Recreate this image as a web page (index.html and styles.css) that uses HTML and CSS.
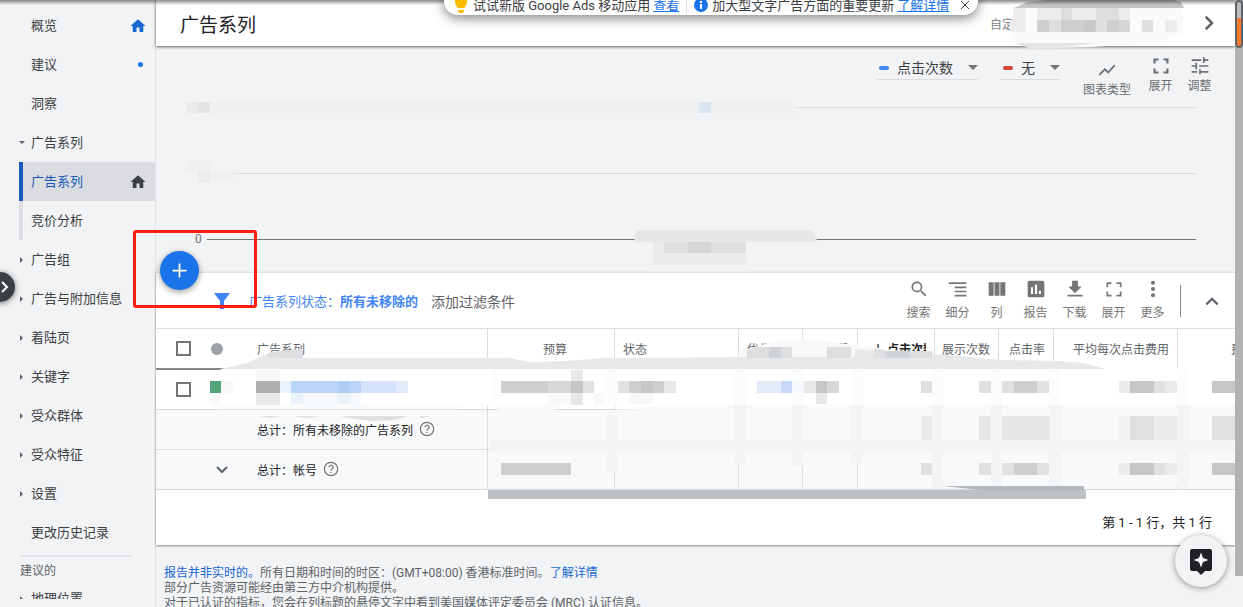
FILE: index.html
```html
<!DOCTYPE html>
<html lang="zh-CN">
<head>
<meta charset="utf-8">
<title>广告系列 - Google Ads</title>
<meta name="viewport" content="width=device-width, initial-scale=1">
<link rel="stylesheet" href="styles.css">
</head>
<body>
<div class="app">
  <nav class="sidebar">
    <div class="nav-scroll">
      <ul class="nav">
        <li><a href="#">概览<svg class="home" viewBox="0 0 24 24"><path d="M10 20v-6h4v6h5v-8h3L12 3 2 12h3v8z"/></svg></a></li>
        <li><a href="#">建议<span class="dot"></span></a></li>
        <li><a href="#">洞察</a></li>
        <li><a href="#" class="open">广告系列</a></li>
        <li class="sub"><a href="#" class="active">广告系列<svg class="home" viewBox="0 0 24 24"><path d="M10 20v-6h4v6h5v-8h3L12 3 2 12h3v8z"/></svg></a></li>
        <li class="sub"><a href="#">竞价分析</a></li>
        <li><a href="#" class="closed">广告组</a></li>
        <li><a href="#" class="closed">广告与附加信息</a></li>
        <li><a href="#" class="closed">着陆页</a></li>
        <li><a href="#" class="closed">关键字</a></li>
        <li><a href="#" class="closed">受众群体</a></li>
        <li><a href="#" class="closed">受众特征</a></li>
        <li><a href="#" class="closed">设置</a></li>
        <li><a href="#">更改历史记录</a></li>
      </ul>
      <h2 class="nav-title">建议的</h2>
      <ul class="nav"><li><a href="#" class="closed">地理位置</a></li></ul>
    </div>
    <button class="handle" aria-label="展开导航"><svg viewBox="0 0 12 16"><path d="M3 3l5 5-5 5"/></svg></button>
  </nav>

  <main class="main">
    <header class="header">
      <h1>广告系列</h1>
      <span class="range">自定义</span>
      <button class="next" aria-label="下一时段"><svg viewBox="0 0 12 16"><path d="M3 3l5 5-5 5"/></svg></button>
      <svg class="mask range-mask" viewBox="1006 0 184 50" aria-hidden="true">
        <path fill="#fafafa" d="M1010 32l3-16 7-9h163v26l-21 9-70 5-40 1-36-3z"/>
        <path fill="#c4c5c6" d="M1014 8l14-6 20-2h126l7 2 3 6z"/>
        <path fill="#e3e4e5" d="M1016 43h83l-44 5-24 1z"/>
        <path fill="#ececec" d="M1013 8h12v12h-12zM1037 8h24v12h-24zM1072 8h24v12h-24zM1119 8h11v12h-11zM1010 20h15v12h-15zM1165 20h12v12h-12z"/>
        <path fill="#dedede" d="M1061 8h11v12h-11zM1096 8h23v12h-23zM1049 20h12v12h-12zM1096 20h11v12h-11zM1142 20h11v12h-11z"/>
        <path fill="#cfcfcf" d="M1037 20h12v12h-12zM1061 20h35v12h-35zM1107 20h12v12h-12z"/>
        <path fill="#c4c4c4" d="M1084 20h11v12h-11zM1119 20h11v12h-11z" opacity=".7"/>
      </svg>
    </header>

    <section class="chart">
      <div class="chart-tools">
        <label class="metric blue"><span class="dash"></span><select aria-label="指标一"><option>点击次数</option></select><span class="caret"></span></label>
        <label class="metric red"><span class="dash"></span><select aria-label="指标二"><option>无</option></select><span class="caret"></span></label>
        <button class="tool low"><svg viewBox="0 0 24 24"><path d="M3.5 18.5l6-6 4 4L22 6.9l-1.400-1.400-7.100 8-4-4L2 17z"/></svg>图表类型</button>
        <button class="tool"><svg viewBox="0 0 24 24"><path d="M3 3h6v2.500H5.500V9H3zM15 3h6v6h-2.500V5.500H15zM3 15h2.500v3.500H9V21H3zM18.500 15H21v6h-6v-2.500h3.500z"/></svg>展开</button>
        <button class="tool"><svg viewBox="0 0 24 24"><path d="M2 18v2h6.500v-2zM2 4v2h11.500V4zM13 22v-2h9v-2h-9v-2h-2v6zM6.500 8v3H2v2h4.500v3h2V8zM22 13v-2H11v2zM15.500 8.500h2V6H22V4h-4.500V1.500h-2z"/></svg>调整</button>
      </div>
      <div class="plot">
        <div class="tick"><span></span></div>
        <div class="tick"><span></span></div>
        <div class="tick base"><span>0</span></div>
        <svg class="mask plot-mask" viewBox="180 95 640 175" aria-hidden="true">
          <path fill="#f1f3f5" d="M180 95h610l6 12-4 8H180zM186 160h48v24h-48z"/>
          <path fill="#eff0f2" d="M210 102h582l4 11H210zM186 160h24v12h-24zM210 172h24v10h-24z"/>
          <path fill="#eaebec" d="M186 102h12v11h-12zM198 172h12v11h-12z"/>
          <path fill="#e3e4e6" d="M198 102h12v11h-12z"/>
          <path fill="#dae4f3" d="M699 102h12v11h-12z"/>
          <path fill="#e6e7e8" d="M634 242l1-8 2-4h175l4 6 1 6z"/>
          <path fill="#eaebec" d="M653 242h11v23h-11zM664 253h82v12h-82z"/>
          <path fill="#dedfe1" d="M664 242h82v11h-82z"/>
          <path fill="#d5d6d8" d="M688 242h23v11h-23z"/>
        </svg>
      </div>
    </section>

    <section class="panel">
      <button class="fab" aria-label="新建广告系列"><svg viewBox="0 0 24 24"><path d="M20 13h-7v7h-2v-7H4v-2h7V4h2v7h7z"/></svg></button>
      <div class="filters">
        <svg class="funnel" viewBox="0 0 16 16"><path d="M0 0h16l-6 8v8H6V8z"/></svg>
        <a href="#" class="state">广告系列状态：<b>所有未移除的</b></a>
        <button class="add">添加过滤条件</button>
        <div class="actions">
          <button class="tool"><svg viewBox="0 0 24 24"><path d="M15.500 14h-.8l-.3-.3A6.500 6.500 0 1 0 13.700 14.400l.3.3v.8l5.500 5.500 1.500-1.500zm-6 0a4.500 4.500 0 1 1 0-9 4.500 4.500 0 0 1 0 9z"/></svg>搜索</button>
          <button class="tool"><svg viewBox="0 0 24 24"><path d="M1 4h21v2H1zM8 9h14v2H8zM8 14h14v2H8zM8 19h14v2H8z"/></svg>细分</button>
          <button class="tool"><svg viewBox="0 0 24 24"><path d="M2 4h6v16H2zM9 4h6v16H9zM16 4h6v16h-6z"/></svg>列</button>
          <button class="tool"><svg viewBox="0 0 24 24"><path fill-rule="evenodd" d="M4 2h16a2 2 0 0 1 2 2v16a2 2 0 0 1-2 2H4a2 2 0 0 1-2-2V4a2 2 0 0 1 2-2zM6 10v8h2.500v-8zM10.700 7v11h2.600V7zM15.500 14v4H18v-4z"/></svg>报告</button>
          <button class="tool"><svg viewBox="0 0 24 24"><path d="M20 9h-4.500V2h-7v7H4l8 8zM3 19v2h18v-2z"/></svg>下载</button>
          <button class="tool"><svg viewBox="0 0 24 24"><path d="M3 4h6v2H5v4H3zM15 4h6v6h-2V6h-4zM3 15h2v4h4v2H3zM19 15h2v6h-6v-2h4z"/></svg>展开</button>
          <button class="tool"><svg viewBox="0 0 24 24"><circle cx="12" cy="4.500" r="2.500"/><circle cx="12" cy="12" r="2.500"/><circle cx="12" cy="19.500" r="2.500"/></svg>更多</button>
        </div>
        <button class="collapse" aria-label="收起"><svg viewBox="0 0 16 12"><path d="M3 9l5-5 5 5"/></svg></button>
      </div>

      <div class="grid-wrap">
        <table class="grid">
          <colgroup><col class="c-check"><col class="c-dot"><col class="c-name"><col class="c-budget"><col class="c-status"><col class="c-opt"><col class="c-type"><col class="c-click"><col class="c-opt"><col class="c-type"><col class="c-status"><col></colgroup>
          <thead>
            <tr>
              <th><input type="checkbox" aria-label="全选"></th><th><span class="status"></span></th><th class="name">广告系列</th><th class="center">预算</th><th class="left">状态</th><th class="left">优化得分</th><th>阶段</th><th class="sorted"><span>↓ 点击次数</span></th><th>展示次数</th><th>点击率</th><th>平均每次点击费用</th><th class="edge"><span>费用</span></th>
            </tr>
          </thead>
          <tbody>
            <tr><td><input type="checkbox" aria-label="选择广告系列"></td><td></td><td class="name"></td><td></td><td></td><td></td><td></td><td></td><td></td><td></td><td></td><td></td></tr>
            <tr class="total"><td></td><td></td><td class="name">总计：所有未移除的广告系列<svg class="help" viewBox="0 0 24 24"><circle cx="12" cy="12" r="10"/><path d="M9 9.500a3 3 0 1 1 4.500 2.600c-1 .7-1.500 1.200-1.500 2.400M12 16.500v2"/></svg></td><td></td><td></td><td></td><td></td><td></td><td></td><td></td><td></td><td></td></tr>
            <tr class="total"><td></td><td><svg class="down" viewBox="0 0 16 12"><path d="M3 3l5 5 5-5"/></svg></td><td class="name">总计：帐号<svg class="help" viewBox="0 0 24 24"><circle cx="12" cy="12" r="10"/><path d="M9 9.500a3 3 0 1 1 4.500 2.600c-1 .7-1.500 1.200-1.500 2.400M12 16.500v2"/></svg></td><td></td><td></td><td></td><td></td><td></td><td></td><td></td><td></td><td></td></tr>
          </tbody>
        </table>
        <div class="hscroll"><div class="hthumb"></div></div>
        <svg class="mask grid-mask" viewBox="156 328 1079 174" aria-hidden="true">
          <path fill="#fff" d="M210 380l11-11 14-1h1000v37H213l-3-5z"/>
          <path fill="#f8f9fb" d="M212 405h253l-8 4H218zM494 405h68l-12 7-48 2zM490 449l4-12V412h70l78-3 13-4h582v82H943v-24H618l-12 10-10-10H494z"/>
          <path fill="#f8f8f9" d="M740 351l18-5 20-5 22-2 20 1 25 4 27 3 30 4v9H740z"/>
          <path fill="#e7e8ea" d="M221 369l26-6 21-10 20-3 15-1v9h185l20 0 22 4 35-1 40-3h40l90-1h120v-8l35 3 60 3 50 5 60 1 24 2 22 6z"/>
          <path fill="#dcdee0" d="M268 353l20-3h15v8h-35zM747 351l8-4h37v11h-45zM827 347h24v11h-24zM874 348l12 3h46v7h-58z"/>
          <path fill="#cfd2d6" d="M769 347h12v11h-12zM886 351h24v7h-24z"/>
          <path fill="#fbfdfc" d="M491 370h6v32h-6zM606 370h11v35h-11zM734 370h12v35h-12zM792 370h11v35h-11zM851 370h12v35h-12zM932 370h11v35h-11zM991 370h11v35h-11zM1049 370h12v35h-12zM1177 370h12v35h-12z"/>
          <path fill="#f3f4f6" d="M606 415h12v55l-12 3zM734 405h12v59h-12zM792 405h11v61h-11zM851 405h12v59h-12zM932 405h11v82h-11zM991 405h11v82h-11zM1049 405h12v82h-12zM1177 405h12v82h-12zM490 440h745v12H490z"/>
          <path fill="#53a47a" d="M210 381h11v12h-11z"/>
          <path fill="#f7f8f8" d="M221 381h12v12h-12zM210 393h11v11h-11zM256 370h24v11h-24zM594 393h11v11h-11zM548 393h23v11h-23zM629 393h24v11h-24z"/>
          <path fill="#afafaf" d="M256 381h24v12h-24z"/>
          <path fill="#e8e8e8" d="M256 393h24v12h-24zM571 370h12v35h-12zM664 381h12v12h-12zM804 381h12v12h-12zM816 393h11v11h-11z"/>
          <path fill="#eaf2fe" d="M280 381h11v12h-11zM291 393h12v11h-12zM338 393h12v11h-12z"/>
          <path fill="#f5f9fe" d="M303 393h35v12h-35zM350 393h11v12h-11zM792 381h12v12h-12z"/>
          <path fill="#bdd5f8" d="M291 381h70v12h-70z"/>
          <path fill="#afcdf6" d="M338 381h12v12h-12z"/>
          <path fill="#d5e3fa" d="M361 381h35v12h-35z"/>
          <path fill="#e3ebfa" d="M396 381h12v12h-12zM757 381h24v12h-24z"/>
          <path fill="#c9d8f5" d="M781 381h11v12h-11z"/>
          <path fill="#cecece" d="M501 381h47v12h-47zM629 381h35v12h-35zM501 463h70v12h-70zM1014 381h23v12h-23zM1014 463h23v12h-23z"/>
          <path fill="#d6d7d7" d="M548 381h23v12h-23zM827 381h12v12h-12z"/>
          <path fill="#c5c6c6" d="M571 381h12v12h-12zM641 381h12v12h-12zM816 381h11v12h-11zM1130 381h24v12h-24zM1212 381h23v12h-23zM1130 463h24v12h-24zM1212 463h23v12h-23z"/>
          <path fill="#dfe0e0" d="M583 381h11v12h-11zM618 381h11v12h-11zM921 381h11v12h-11zM979 381h12v12h-12zM1002 381h12v12h-12zM1037 381h12v12h-12zM1154 381h11v12h-11zM921 463h11v12h-11zM979 463h12v12h-12zM1002 463h12v12h-12zM1037 463h12v12h-12zM1154 463h11v12h-11zM1130 416h24v24h-24zM1212 416h23v24h-23z"/>
          <path fill="#eaebec" d="M1119 381h11v12h-11zM1165 381h12v12h-12zM1119 463h11v12h-11zM1165 463h12v12h-12zM1154 416h23v24h-23zM921 416h11v24h-11z"/>
          <path fill="#e5e6e8" d="M979 416h12v24h-12zM1002 416h47v24h-47z"/>
          <path fill="#f1f2f3" d="M1119 416h11v24h-11z"/>
          <path fill="#dedfe1" d="M258 416h22l-8 2zM291 416h29l-12 2zM340 416h68l-14 4-20 1-20-2zM419 416h12l-10 2z"/>
          <path fill="#b5b7bf" d="M943 486h141v4H980z"/>
        </svg>
      </div>
      <div class="pager">第 1 - 1 行，共 1 行</div>
    </section>

    <footer class="footer">
      <p><a href="#">报告并非实时的。</a>所有日期和时间的时区：(GMT+08:00) 香港标准时间。<a href="#">了解详情</a></p>
      <p>部分广告资源可能经由第三方中介机构提供。</p>
      <p>对于已认证的指标，您会在列标题的悬停文字中看到美国媒体评定委员会 (MRC) 认证信息。</p>
    </footer>
    <button class="assist" aria-label="智能助理"><svg viewBox="0 0 24 26"><path fill="#202124" d="M3 0h18a2 2 0 0 1 2 2v18a2 2 0 0 1-2 2h-5l-4 4-4-4H3a2 2 0 0 1-2-2V2a2 2 0 0 1 2-2z"/><path fill="#fff" d="M12 3.500l2 5.500 5.500 2-5.500 2-2 5.500-2-5.500-5.500-2 5.500-2z"/></svg></button>
  </main>

  <div class="vscroll"><div class="vtrack"><div class="vthumb"></div></div></div>

  <div class="notice">
    <svg class="bulb" viewBox="0 0 12 18"><path d="M6 0a6 6 0 0 1 6 6c0 3-2 4-2.500 6h-7C2 10 0 9 0 6a6 6 0 0 1 6-6zM3 14h6v1l-1 2H4l-1-2z"/></svg>
    <span>试试新版 Google Ads 移动应用</span>
    <a href="#">查看</a>
    <span class="bar"></span>
    <svg class="info" viewBox="0 0 14 14"><circle cx="7" cy="7" r="7"/><path fill="#fff" d="M6 3h2v2H6zM6 6h2v5H6z"/></svg>
    <span>加大型文字广告方面的重要更新</span>
    <a href="#">了解详情</a>
    <button aria-label="关闭"><svg viewBox="0 0 10 10"><path d="M1 1l8 8M9 1L1 9"/></svg></button>
  </div>
  <div class="highlight"></div>
</div>
</body>
</html>
```
FILE: styles.css
```css
* { box-sizing: border-box; }
body {
  margin: 0;
  overflow: hidden;
  font-family: Roboto, "Noto Sans CJK SC", sans-serif;
  font-size: 13px;
  color: #3c4043;
  background: #f1f3f5;
}
a { color: #1967d2; text-decoration: none; }
button {
  padding: 0;
  border: 0;
  background: none;
  color: inherit;
  font: inherit;
}
h1, h2, p, ul { margin: 0; padding: 0; font-weight: 400; }
ul { list-style: none; }
svg { display: block; }

.app { position: relative; display: flex; height: 100vh; }
.app::before {
  content: "";
  position: absolute;
  inset: 0 0 auto;
  height: 5px;
  z-index: 4;
  background: linear-gradient(rgba(0, 0, 0, .45), rgba(0, 0, 0, 0));
}

/* navigation */
.sidebar {
  position: relative;
  flex: 0 0 156px;
  padding: 6px 0 8px;
  border-right: 1px solid #dfe1e4;
}
.nav-scroll { height: 100%; overflow: hidden; }
.nav a {
  display: flex;
  align-items: center;
  height: 39px;
  padding: 0 8px 0 31px;
  color: #3c4043;
  line-height: 20px;
}
.nav a::before { content: ""; width: 0; }
.nav .open::before, .nav .closed::before {
  margin-left: -12px;
  margin-right: 6px;
  border: 3px solid transparent;
}
.nav .open::before { border-top-color: #5f6368; border-bottom: 0; }
.nav .closed::before { border-left-color: #5f6368; margin-left: -11px; margin-right: 5px; }
.nav .sub { margin-left: 19px; }
.nav .sub a { padding-left: 8px; border-left: 4px solid #dadce0; }
.nav .sub .active { border-color: #185abc; background: #dadce0; color: #185abc; }
.home { width: 18px; height: 18px; margin-left: auto; fill: #1967d2; }
.active .home { fill: #3c4043; }
.dot { width: 5px; height: 5px; margin: 0 4px 0 auto; border-radius: 50%; background: #1a73e8; }
.nav-title {
  margin: 3px 24px 0 20px;
  padding-top: 4px;
  border-top: 2px solid #e1e3e6;
  font-size: 12px;
  line-height: 20px;
  height: 24px;
  color: #5f6368;
}
.handle {
  position: absolute;
  left: -15px;
  top: 272px;
  width: 30px;
  height: 30px;
  padding-left: 14px;
  border-radius: 50%;
  background: #3c4043;
  box-shadow: 0 1px 6px rgba(0, 0, 0, .5);
}
.handle svg { width: 12px; height: 16px; }
.handle path, .next path, .collapse path, .down path { fill: none; stroke: #fff; stroke-width: 2; }
.next path, .collapse path, .down path { stroke: #5f6368; }

/* header */
.main { position: relative; flex: 1; min-width: 0; display: flex; flex-direction: column; }
.main > * { flex-shrink: 0; }
.header {
  position: relative;
  z-index: 2;
  display: flex;
  align-items: center;
  height: 46px;
  padding: 0 20px 0 24px;
  background: #fff;
  box-shadow: 0 1px 3px rgba(0, 0, 0, .6);
}
h1 { flex: 1; font-size: 19px; color: #202124; }
.range { width: 212px; font-size: 12px; color: #80868b; }
.next { width: 13px; }
.next svg { width: 15px; height: 20px; }
.next path, .collapse path { stroke-width: 2; }
.mask { position: absolute; pointer-events: none; }
.range-mask { right: 45px; top: 0; width: 184px; height: 50px; }

/* chart */
.chart { height: 226px; }
.chart-tools { display: flex; justify-content: flex-end; height: 54px; padding: 10px 16px 0 0; }
.metric {
  display: flex;
  align-items: center;
  gap: 8px;
  height: 24px;
  margin-right: 23px;
  border-bottom: 1px solid #dadce0;
}
.dash { width: 10px; height: 4px; margin-left: 2px; border-radius: 2px; background: #4285f4; }
.red .dash { background: #db4437; }
.metric select {
  width: 62px;
  border: 0;
  padding: 0;
  appearance: none;
  background: none;
  font: inherit;
  font-size: 14px;
  color: #3c4043;
}
.red select { width: 20px; }
.caret { border: 5px solid transparent; border-top-color: #757575; border-bottom: 0; margin-left: 1px; }
.tool {
  display: flex;
  flex-direction: column;
  align-items: center;
  gap: 1px;
  width: 39px;
  font-size: 12px;
  line-height: 18px;
  white-space: nowrap;
  color: #6b6e72;
}
.tool svg { width: 20px; height: 20px; fill: #6b6e72; }
.chart-tools .low { width: 48px; margin-right: 10px; padding-top: 4px; }
.plot { position: relative; padding-top: 7px; }
.tick { display: flex; align-items: flex-start; height: 66px; margin: 0 39px 0 30px; }
.tick::after { content: ""; flex: 1; border-top: 1px solid #dadce0; }
.tick span { width: 21px; margin-top: -8px; padding-left: 9px; font-size: 12px; line-height: 16px; color: #757575; }
.base { height: 33px; }
.base::after { border-color: #757575; }
.plot-mask { left: 24px; top: -5px; width: 640px; height: 175px; }

/* table panel */
.panel {
  position: relative;
  border-top: 1px solid #dfe1e4;
  background: #fff;
  box-shadow: 0 1px 2px rgba(0, 0, 0, .45);
}
.fab {
  position: absolute;
  z-index: 1;
  left: 4px;
  top: -22px;
  width: 39px;
  height: 39px;
  padding: 9px;
  border-radius: 50%;
  background: #1a73e8;
  box-shadow: 0 2px 6px rgba(0, 0, 0, .4);
}
.fab svg { width: 21px; height: 21px; fill: #fff; }
.filters { display: flex; align-items: center; height: 55px; padding: 0 11px 0 58px; }
.funnel { width: 16px; height: 16px; fill: #4285f4; }
.state { margin-left: 19px; color: #4285f4; }
.add { margin-left: 13px; font-size: 14px; color: #5f6368; }
.actions {
  display: flex;
  margin-left: auto;
  padding-right: 7px;
}
.actions::after { content: ""; align-self: center; height: 32px; margin-left: 8px; margin-right: -8px; border-left: 1px solid #80868b; }
.actions .tool { gap: 5px; color: #757575; }
.actions svg { fill: #757575; }
.collapse { width: 24px; margin-left: 20px; }
.collapse svg { width: 18px; height: 14px; margin: auto; }
.grid-wrap { position: relative; overflow: hidden; }
.grid { width: 100%; table-layout: fixed; border-collapse: separate; border-spacing: 0; border-top: 1px solid #dadce0; }
.c-check { width: 49px; }
.c-dot { width: 41px; }
.c-name { width: 242px; }
.c-budget { width: 127px; }
.c-status { width: 124px; }
.c-opt { width: 64px; }
.c-type { width: 55px; }
.c-click { width: 77px; }
.grid th, .grid td {
  height: 40px;
  padding: 0 8px 0 0;
  border-right: 1px solid #dadce0;
  border-bottom: 1px solid #dadce0;
  text-align: right;
  font-size: 12px;
  font-weight: 400;
  white-space: nowrap;
  color: #5f6368;
}
.grid th { height: 41px; border-bottom: 2px solid #80868b; }
.grid th:nth-child(-n+2), .grid td:nth-child(-n+2), .grid th:last-child, .grid td:last-child { border-right: 0; }
.grid .name { padding-left: 11px; text-align: left; color: #5f6368; }
.grid .center { padding-left: 16px; text-align: center; }
.grid .left { text-align: left; padding-left: 8px; }
.grid th.sorted { color: #202124; font-weight: 700; }
.sorted span { display: block; margin-left: 14px; overflow: hidden; text-align: left; }
.grid th.edge { padding: 0 0 0 53px; text-align: left; overflow: hidden; }
.total td { background: #f8f9fb; }
.grid .total .name { color: #202124; }
.grid input {
  display: block;
  appearance: none;
  width: 15px;
  height: 15px;
  margin: 0 0 0 20px;
  border: 2px solid #757575;
  background: #fff;
}
.status { display: block; width: 12px; height: 12px; margin-left: 6px; border-radius: 50%; background: #9aa0a6; }
.help { display: inline-block; width: 16px; height: 16px; margin-left: 6px; vertical-align: -2px; fill: none; stroke: #757575; stroke-width: 1.800; }
.down { width: 16px; height: 12px; margin-left: 9px; }
.hscroll { padding-left: 332px; }
.hthumb { width: 80%; height: 9px; background: #bdc1c6; }
.grid-mask { left: 0; top: 0; width: 1079px; height: 174px; }
.pager { padding: 14px 23px 12px 0; text-align: right; line-height: 20px; color: #202124; }

.footer { padding: 21px 8px 0; font-size: 12px; line-height: 15px; white-space: nowrap; color: #5f6368; }
.assist {
  position: absolute;
  right: 8px;
  bottom: 20px;
  width: 52px;
  height: 52px;
  padding: 14px;
  border-radius: 50%;
  background: #f1f3f4;
  box-shadow: 0 1px 6px rgba(0, 0, 0, .4);
}
.assist svg { width: 24px; height: 26px; }

/* page scrollbar */
.vscroll { position: relative; z-index: 5; flex: 0 0 8px; padding-bottom: 31px; }
.vtrack { height: 100%; background: #b0b2b4; }
.vthumb { height: 48px; border: 2px solid #5f6368; border-radius: 4px; background: linear-gradient(#bdbdbd 16px, #fa7b2c 16px); }

/* notification strip and callout */
.notice {
  position: absolute;
  z-index: 5;
  left: 444px;
  top: -6px;
  display: flex;
  align-items: center;
  width: 534px;
  height: 21px;
  padding: 0 8px 0 11px;
  border-radius: 0 0 14px 14px;
  background: #fff;
  box-shadow: 0 3px 12px rgba(0, 0, 0, .5);
  white-space: nowrap;
}
.notice a { margin-left: 3px; color: #1a73e8; text-decoration: underline; }
.bulb { width: 12px; height: 18px; margin-right: 6px; fill: #fbbc04; }
.bar { height: 16px; margin: 0 7px; border-left: 1px solid #dadce0; }
.info { width: 14px; height: 14px; margin-right: 4px; fill: #1a73e8; }
.notice button { margin-left: auto; }
.notice button svg { width: 10px; height: 10px; fill: none; stroke: #3c4043; }
.highlight {
  position: absolute;
  z-index: 6;
  left: 133px;
  top: 230px;
  width: 124px;
  height: 78px;
  border: 3px solid #ff1d12;
  border-radius: 3px;
  pointer-events: none;
}
```
